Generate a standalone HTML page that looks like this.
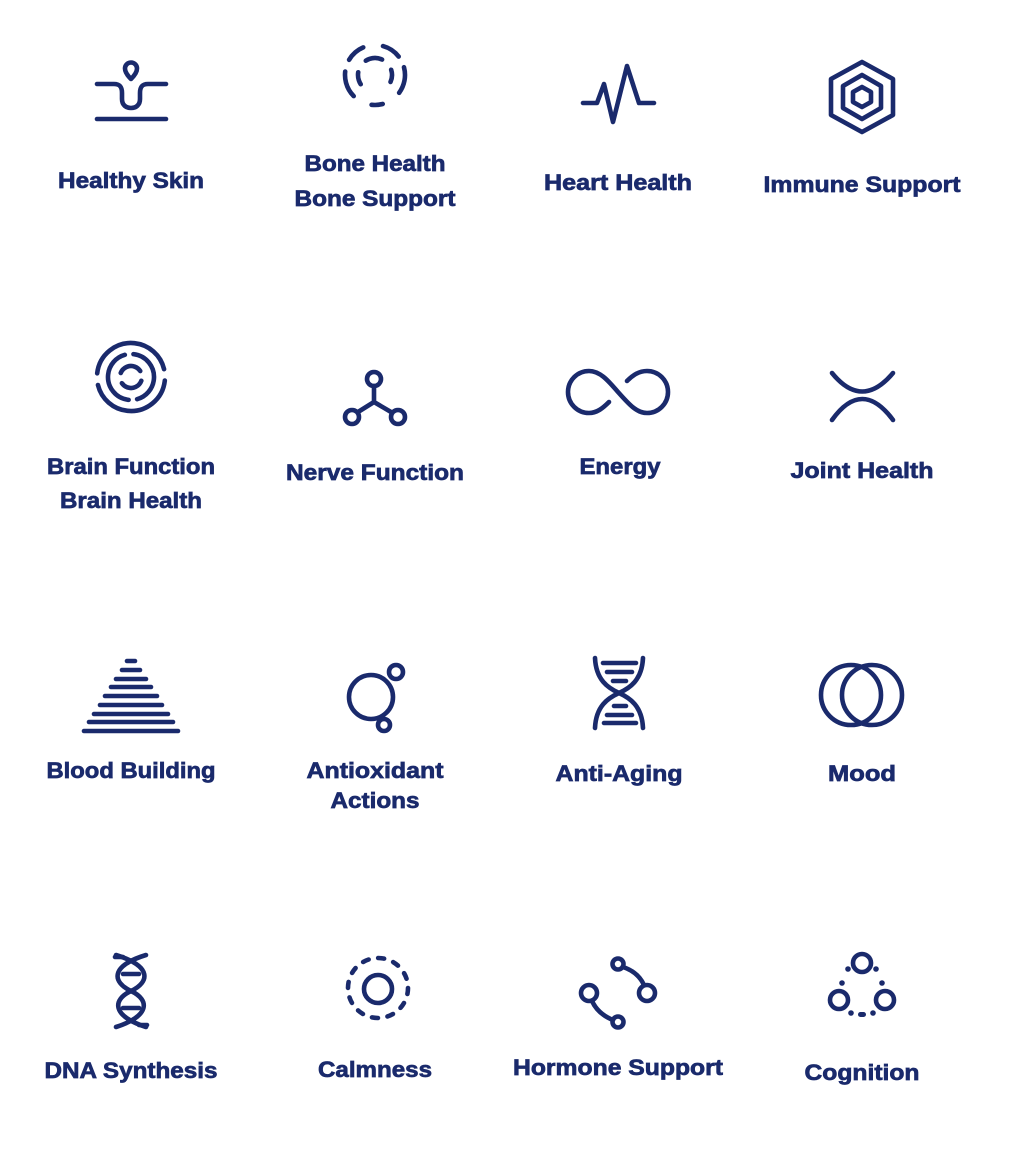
<!DOCTYPE html>
<html><head><meta charset="utf-8">
<style>
html,body{margin:0;padding:0;background:#fff;}
svg{display:block;}
text{font-family:"Liberation Sans",sans-serif;font-weight:bold;font-size:22px;fill:#1a2a6c;stroke:#1a2a6c;stroke-width:0.7px;text-anchor:middle;}
</style></head>
<body>
<svg width="1014" height="1164" viewBox="0 0 1014 1164" xmlns="http://www.w3.org/2000/svg">
<g fill="none" stroke="#1a2a6c" stroke-width="4.6" stroke-linecap="round" stroke-linejoin="round">
<!-- Healthy Skin -->
<path d="M97 84 H114 C120 84 122 87 122 93 V99 C122 105 126 108 131 108 C136 108 140 105 140 99 V93 C140 87 142 84 148 84 H166"/>
<path d="M131 79 C127 75 125 72 125 68.5 A6 6 0 0 1 137 68.5 C137 72 135 75 131 79 Z"/>
<path d="M97 119 H166"/>
<!-- Bone -->
<circle cx="375" cy="75" r="30" stroke-dasharray="26.9 20.2 11.2 20.2 26.9 12.4 19.1 20.2 19.1 12.4" transform="rotate(345 375 75)"/>
<circle cx="375" cy="75" r="17" stroke-dasharray="12.5 36.4 12.5 14.2 17 14.2" transform="rotate(342 375 75)"/>
<!-- Heart -->
<path d="M583 103 H597 L604 84 L613 122 L627 66 L639 103 H654"/>
<!-- Immune -->
<path d="M862 62 L893 79 V115 L862 132 L831 115 V79 Z"/>
<path d="M862 75 L881 86 V108 L862 119 L843 108 V86 Z"/>
<path d="M862 87 L871 92 V102 L862 107 L853 102 V92 Z"/>
<!-- Brain -->
<circle cx="131" cy="377" r="34" stroke-dasharray="95 11.8" transform="rotate(6 131 377)"/>
<circle cx="131" cy="377" r="23" stroke-dasharray="63.5 8.7" transform="rotate(96 131 377)"/>
<circle cx="131" cy="377" r="11" stroke-dasharray="24 10.6" transform="rotate(20 131 377)"/>
<!-- Nerve -->
<circle cx="374" cy="379" r="7"/>
<circle cx="352" cy="417" r="7"/>
<circle cx="398" cy="417" r="7"/>
<path d="M374 386 V402 M374 402 L358 412 M374 402 L391 412"/>
<!-- Energy -->
<path d="M609 402 C603 408 597 413 589 413 A21 21 0 0 1 589 371 C601 371 610 383 618 392 C628 403 636 413 647 413 A21 21 0 0 0 647 371 C639 371 633 375 627 381"/>
<!-- Joint -->
<path d="M832 373 Q862 410 893 373"/>
<path d="M832 420 Q862 378 893 420"/>
<!-- Blood building -->
<path d="M127 661 H135"/><path d="M122 670 H140"/><path d="M116 679 H146"/><path d="M111 687 H151"/><path d="M105 696 H157"/><path d="M100 705 H162"/><path d="M94 714 H168"/><path d="M89 722 H173"/><path d="M84 731 H178"/>
<!-- Antioxidant -->
<circle cx="371" cy="697" r="22"/>
<circle cx="396" cy="672" r="7"/>
<circle cx="384" cy="725" r="6"/>
<!-- Anti-Aging -->
<path d="M595 658 C596 680 608 688 619 693 C630 688 642 680 643 658"/>
<path d="M595 728 C596 706 608 698 619 693 C630 698 642 706 643 728"/>
<path d="M603 663 H636 M607 672 H632 M613 681 H626 M614 706 H626 M607 715 H632 M604 723 H636"/>
<!-- Mood -->
<circle cx="851" cy="695" r="30"/>
<circle cx="872" cy="695" r="30"/>
<!-- DNA Synthesis -->
<path d="M116 955 C152 966 150 982 131 991 C112 1000 112 1016 146 1027"/>
<path d="M146 955 C110 966 112 982 131 991 C150 1000 150 1016 116 1027"/>
<path d="M123 974 H139 M123 1008 H139 M115 957 H123 M139 1025 H147"/>
<!-- Calmness -->
<circle cx="378" cy="988" r="30" stroke-dasharray="6 9.7"/>
<circle cx="378" cy="989" r="14"/>
<!-- Hormone -->
<circle cx="618" cy="964" r="5.5"/>
<circle cx="647" cy="993" r="8"/>
<circle cx="589" cy="993" r="8"/>
<circle cx="618" cy="1022" r="5.5"/>
<path d="M623 967 Q638 972 644 985"/>
<path d="M592 1001 Q598 1014 613 1020"/>
<!-- Cognition -->
<circle cx="862" cy="963" r="9"/>
<circle cx="839" cy="1000" r="9"/>
<circle cx="885" cy="1000" r="9"/>
</g>
<g fill="#1a2a6c">
<circle cx="848" cy="969" r="2.8"/><circle cx="842" cy="983" r="2.8"/>
<circle cx="876" cy="969" r="2.8"/><circle cx="882" cy="983" r="2.8"/>
<circle cx="851" cy="1013" r="2.8"/><circle cx="873" cy="1013" r="2.8"/>
<rect x="858" y="1012" width="8" height="5" rx="2.5"/>
</g>
<!-- labels -->
<text x="131" y="188" textLength="146" lengthAdjust="spacingAndGlyphs">Healthy Skin</text>
<text x="375" y="171" textLength="141" lengthAdjust="spacingAndGlyphs">Bone Health</text>
<text x="375" y="206" textLength="161" lengthAdjust="spacingAndGlyphs">Bone Support</text>
<text x="618" y="190" textLength="148" lengthAdjust="spacingAndGlyphs">Heart Health</text>
<text x="862" y="192" textLength="197" lengthAdjust="spacingAndGlyphs">Immune Support</text>
<text x="131" y="474" textLength="168" lengthAdjust="spacingAndGlyphs">Brain Function</text>
<text x="131" y="508" textLength="142" lengthAdjust="spacingAndGlyphs">Brain Health</text>
<text x="375" y="480" textLength="178" lengthAdjust="spacingAndGlyphs">Nerve Function</text>
<text x="620" y="474" textLength="81" lengthAdjust="spacingAndGlyphs">Energy</text>
<text x="862" y="478" textLength="143" lengthAdjust="spacingAndGlyphs">Joint Health</text>
<text x="131" y="778" textLength="169" lengthAdjust="spacingAndGlyphs">Blood Building</text>
<text x="375" y="778" textLength="137" lengthAdjust="spacingAndGlyphs">Antioxidant</text>
<text x="375" y="808" textLength="89" lengthAdjust="spacingAndGlyphs">Actions</text>
<text x="619" y="781" textLength="127" lengthAdjust="spacingAndGlyphs">Anti-Aging</text>
<text x="862" y="781" textLength="68" lengthAdjust="spacingAndGlyphs">Mood</text>
<text x="131" y="1078" textLength="173" lengthAdjust="spacingAndGlyphs">DNA Synthesis</text>
<text x="375" y="1077" textLength="114" lengthAdjust="spacingAndGlyphs">Calmness</text>
<text x="618" y="1075" textLength="210" lengthAdjust="spacingAndGlyphs">Hormone Support</text>
<text x="862" y="1080" textLength="115" lengthAdjust="spacingAndGlyphs">Cognition</text>
</svg>
</body></html>
